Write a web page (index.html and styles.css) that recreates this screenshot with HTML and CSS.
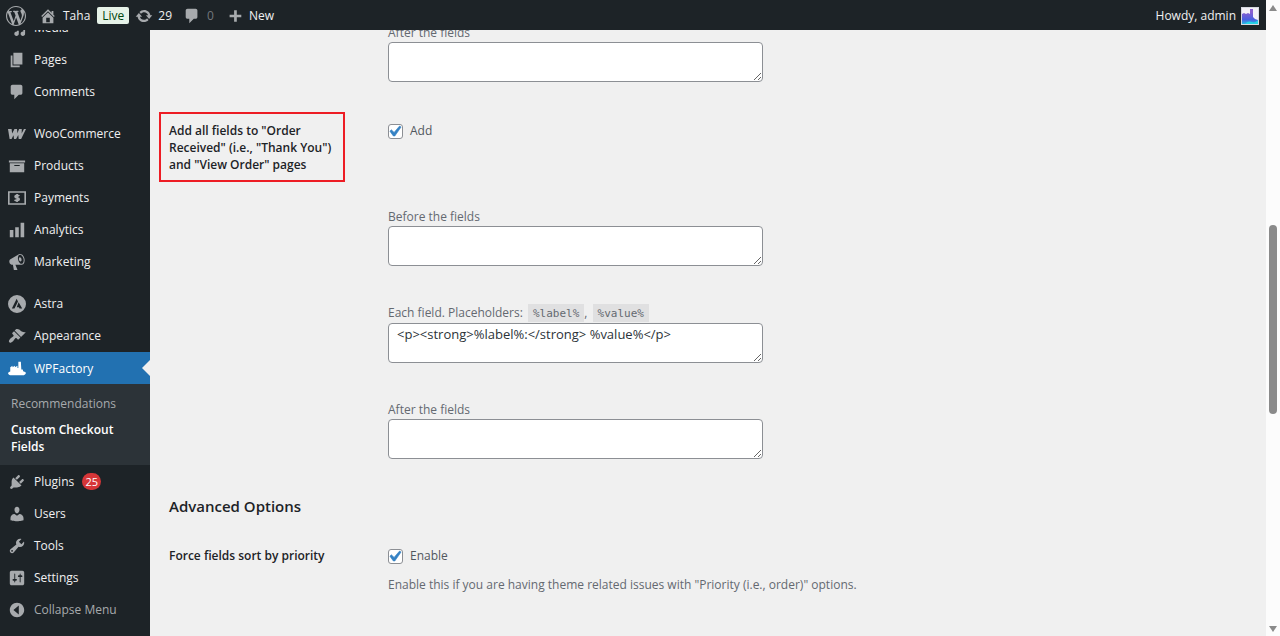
FILE: index.html
```
<!DOCTYPE html>
<html lang="en">
<head>
<meta charset="utf-8">
<meta name="viewport" content="width=device-width, initial-scale=1">
<title>Custom Checkout Fields</title>
<link rel="stylesheet" href="styles.css">
</head>
<body>
<div class="app">
  <div class="page">
    <header class="bar">
      <a class="bar-item bar-logo" href="#" aria-label="About WordPress"><svg class="icon icon-lg" viewBox="0 0 20 20"><path d="M20 10c0-5.51-4.49-10-10-10C4.48 0 0 4.49 0 10c0 5.52 4.48 10 10 10 5.51 0 10-4.48 10-10zM7.78 15.37L4.37 6.22c.55-.02 1.17-.08 1.17-.08.5-.06.44-1.13-.06-1.11 0 0-1.45.11-2.37.11-.18 0-.37 0-.58-.01C4.12 2.69 6.87 1.11 10 1.11c2.33 0 4.45.87 6.05 2.34-.68-.11-1.65.39-1.65 1.58 0 .74.45 1.36.9 2.1.35.61.55 1.36.55 2.46 0 1.49-1.4 5-1.4 5l-3.03-8.37c.54-.02.82-.17.82-.17.5-.05.44-1.25-.06-1.22 0 0-1.44.12-2.38.12-.87 0-2.33-.12-2.33-.12-.5-.03-.56 1.2-.06 1.22l.92.08 1.26 3.41zM17.41 10c.24-.64.74-1.87.43-4.25.7 1.29 1.05 2.71 1.05 4.25 0 3.29-1.73 6.24-4.4 7.78.97-2.59 1.94-5.2 2.92-7.78zM6.1 18.09C3.12 16.65 1.11 13.53 1.11 10c0-1.3.23-2.48.72-3.59C3.25 10.3 4.67 14.2 6.1 18.09zm4.03-6.63l2.58 6.98c-.86.29-1.76.45-2.71.45-.79 0-1.57-.11-2.29-.33.81-2.38 1.62-4.74 2.42-7.1z"/></svg></a>
      <a class="bar-item bar-site" href="#"><svg class="icon" viewBox="0 0 20 20"><path d="M16 8.5l1.53 1.53-1.06 1.06L10 4.6l-6.47 6.49-1.06-1.06L10 2.5l4 4v-2h2v4zm-6-2.46l6 5.99V18H4v-5.97zM12 17v-5H8v5h4z"/></svg><span>Taha</span></a>
      <a class="live" href="#">Live</a>
      <a class="bar-item bar-updates" href="#"><svg class="icon" viewBox="0 0 20 20"><path d="M10.2 3.28c3.53 0 6.43 2.61 6.92 6h2.08l-3.5 4-3.5-4h2.32c-.45-1.97-2.21-3.45-4.32-3.45-1.45 0-2.73.71-3.54 1.78L4.95 5.66C6.23 4.2 8.11 3.28 10.2 3.28zm-.4 13.44c-3.52 0-6.43-2.61-6.92-6H.8l3.5-4c1.17 1.33 2.33 2.67 3.5 4H5.48c.45 1.97 2.21 3.45 4.32 3.45 1.45 0 2.73-.71 3.54-1.78l1.71 1.95c-1.28 1.46-3.15 2.38-5.25 2.38z"/></svg><span>29</span></a>
      <a class="bar-item bar-comments" href="#"><svg class="icon" viewBox="0 0 20 20"><path d="M5 2h9c1.1 0 2 .9 2 2v7c0 1.1-.9 2-2 2h-2l-5 5v-5H5c-1.1 0-2-.9-2-2V4c0-1.1.9-2 2-2z"/></svg><span>0</span></a>
      <a class="bar-item bar-new" href="#"><svg class="icon" viewBox="0 0 20 20"><path d="M17 8.500v3h-5v5H9v-5H4v-3h5v-5h3v5h5z"/></svg><span>New</span></a>
      <a class="bar-item bar-user" href="#"><span>Howdy, admin</span>
        <svg class="avatar" viewBox="0 0 18 18"><defs><linearGradient id="av" x1="0" y1="0" x2="0" y2="1"><stop offset="0.2" stop-color="#8a5fd0"/><stop offset="0.7" stop-color="#4a5fe0"/><stop offset="1" stop-color="#27b9e8"/></linearGradient></defs><rect width="18" height="18" fill="#d5d8e0"/><rect x="1" y="1" width="16" height="16" fill="#f3f1f8"/><path d="M1 7l2-1 2 1 2-1 2 1V2h3v8l2 2 3 1v4H1z" fill="url(#av)"/><path d="M4 17c2-3 5-3 7-2s4 0 6-2v4z" fill="#25d3e6"/></svg></a>
    </header>
    <div class="body">
      <nav class="side" aria-label="Main menu">
        <ul class="menu">
          <li><a class="item" href="#"><svg class="icon" viewBox="0 0 20 20"><path d="M13 11V4c0-.55-.45-1-1-1h-1.670L9 1H5L3.670 3H2c-.55 0-1 .45-1 1v7c0 .55.45 1 1 1h10c.55 0 1-.45 1-1zM7 4.500c1.380 0 2.500 1.120 2.500 2.500S8.380 9.500 7 9.500 4.500 8.380 4.500 7 5.620 4.500 7 4.500zM14 6h5v10.500c0 1.380-1.120 2.500-2.500 2.500S14 17.880 14 16.500s1.120-2.500 2.500-2.500c.17 0 .34.02.5.05V9h-3V6zm-4 8.050V13h2v3.500c0 1.380-1.120 2.500-2.500 2.500S7 17.880 7 16.500 8.120 14 9.500 14c.17 0 .34.02.5.05z"/></svg>Media</a></li>
          <li><a class="item" href="#"><svg class="icon" viewBox="0 0 20 20"><path d="M6 15V2h10v13H6zm-1 1h8v2H3V5h2v11z"/></svg>Pages</a></li>
          <li><a class="item" href="#"><svg class="icon" viewBox="0 0 20 20"><path d="M5 2h9c1.1 0 2 .9 2 2v7c0 1.1-.9 2-2 2h-2l-5 5v-5H5c-1.1 0-2-.9-2-2V4c0-1.1.9-2 2-2z"/></svg>Comments</a></li>
          <li class="gap"><a class="item" href="#"><svg class="icon" viewBox="0 0 20 20"><path d="M0 4.500h4l.6 5 2.600-5h2.800l.5 4.700 1.800-4.700h3l-.1 4.900 2.500-4.900H20l-5.400 11h-2.700l-.5-4.300-2.400 4.300H6.700l-.6-4-2.200 4H1.800z"/></svg>WooCommerce</a></li>
          <li><a class="item" href="#"><svg class="icon" viewBox="0 0 20 20"><path d="M19 4v2H1V4h18zM2 7h16v10H2V7zm11 3V9H7v1h6z"/></svg>Products</a></li>
          <li><a class="item" href="#"><svg class="icon" viewBox="0 0 20 20"><path d="M0 2.500h20v15H0zM1.800 4.300v11.400h16.400V4.300z" fill-rule="evenodd"/><path class="line" d="M12.500 8C11.500 6.800 7.900 6.700 7.900 8.500c0 2 4.500 1 4.500 3 0 1.900-3.900 1.900-5 .5M10.100 5.600v8.800"/></svg>Payments</a></li>
          <li><a class="item" href="#"><svg class="icon" viewBox="0 0 20 20"><path d="M18 18V2h-4v16h4zm-6 0V7H8v11h4zm-6 0v-8H2v8h4z"/></svg>Analytics</a></li>
          <li><a class="item" href="#"><svg class="icon" viewBox="0 0 20 20"><path d="M18.150 5.940c.46 1.620.38 3.220-.02 4.480-.42 1.280-1.260 2.180-2.300 2.480-.16.06-.26.06-.4.06-.06.02-.12.02-.18.02-.06.02-.14.02-.22.02h-6.800l2.220 5.500c.02.14-.06.26-.14.34-.08.1-.24.16-.34.16H6.950c-.1 0-.26-.06-.34-.16-.08-.08-.16-.2-.14-.34l-1-5.500H4.250l-.02-.02c-.5.06-1.080-.18-1.540-.62s-.88-1.080-1.060-1.880c-.24-.8-.2-1.560-.02-2.200.18-.62.58-1.080 1.060-1.300l.02-.02 9-5.400c.1-.06.18-.1.24-.16.06-.04.14-.08.24-.12.16-.08.28-.12.5-.18 1.040-.3 2.240.1 3.220.98s1.840 2.240 2.260 3.860zm-2.580 5.980h-.02c.4-.1.74-.34 1.040-.7.58-.7.86-1.760.86-3.040 0-.64-.1-1.300-.28-1.980-.34-1.360-1.020-2.500-1.780-3.240s-1.680-1.100-2.460-.88c-.82.22-1.400.96-1.700 2-.32 1.040-.28 2.360.06 3.720.38 1.360 1 2.500 1.800 3.240.78.74 1.620 1.100 2.480.88zm-2.540-7.080c.22-.04.42-.02.62.04.38.16.76.48 1.020 1s.42 1.200.42 1.780c0 .3-.04.56-.12.8-.18.48-.44.84-.86.94-.34.1-.8-.06-1.140-.4s-.64-.86-.78-1.500c-.18-.62-.12-1.240.02-1.720s.48-.84.82-.94z"/></svg>Marketing</a></li>
          <li class="gap"><a class="item" href="#"><svg class="icon" viewBox="0 0 20 20"><path fill-rule="evenodd" d="M10 0a10 10 0 100 20 10 10 0 000-20zM9.600 4.200l1.500 2.900-3.900 7.900H4.300zM11.800 8.100l4 6.900h-3l-.7-1.500H9.700z"/></svg>Astra</a></li>
          <li><a class="item" href="#"><svg class="icon" viewBox="0 0 20 20"><path d="M14.480 11.060L7.410 3.990l1.500-1.500c.5-.56 2.300-.47 3.510.32 1.210.8 1.430 1.280 2.910 2.100 1.180.64 2.450 1.260 4.450.85zm-.71.71L6.700 4.700 4.930 6.470c-.39.39-.39 1.020 0 1.410l1.060 1.060c.39.39.39 1.030 0 1.420-.6.6-1.430 1.110-2.210 1.690-.35.26-.7.53-1.010.84C1.430 14.230.4 16.080 1.400 17.070c.99 1 2.840-.03 4.180-1.360.31-.31.58-.66.85-1.020.57-.78 1.080-1.610 1.690-2.210.39-.39 1.020-.39 1.410 0l1.060 1.060c.39.39 1.020.39 1.410 0z"/></svg>Appearance</a></li>
          <li class="current"><a class="item" href="#" aria-current="true"><svg class="icon" viewBox="0 0 20 20"><path d="M2.500 8L5 6.500V8l2.700-1.500V8l2.800-1.500V9h1V2h2.800l.5 8.500h1.600l.4 2c1 .1 2.200.8 3.200 1.800-.2 1.400-1.200 2.400-2.400 2.700H2.600C1.200 16.800.2 15.800 0 14.400c.7-.9 1.600-1.400 2.500-1.500z"/></svg>WPFactory</a>
            <ul class="submenu">
              <li><a href="#">Recommendations</a></li>
              <li><a class="active" href="#" aria-current="page">Custom Checkout Fields</a></li>
            </ul>
          </li>
          <li><a class="item" href="#"><svg class="icon" viewBox="0 0 20 20"><path d="M13.110 4.360L9.870 7.600 8 5.730l3.240-3.240c.35-.34 1.050-.2 1.560.32.52.51.66 1.210.31 1.550zm-8 1.770l.91-1.120 9.010 9.010-1.190.84c-.71.71-2.630 1.160-3.820 1.160H6.140L4.900 17.260c-.59.59-1.540.59-2.120 0-.59-.58-.59-1.530 0-2.120l1.240-1.240v-3.880c0-1.130.4-3.190 1.090-3.890zm7.260 3.970l3.240-3.240c.34-.35 1.040-.21 1.550.31.52.51.66 1.210.31 1.550l-3.240 3.250z"/></svg>Plugins<span class="count">25</span></a></li>
          <li><a class="item" href="#"><svg class="icon" viewBox="0 0 20 20"><path d="M10 9.250c-2.270 0-2.730-3.440-2.730-3.440C7 4.020 7.820 2 9.970 2c2.160 0 2.980 2.020 2.710 3.810 0 0-.41 3.440-2.680 3.440zm0 2.570L12.720 10c2.390 0 4.520 2.330 4.520 4.530v2.490s-3.650 1.130-7.240 1.130c-3.650 0-7.240-1.130-7.240-1.130v-2.490c0-2.250 1.940-4.480 4.470-4.480z"/></svg>Users</a></li>
          <li><a class="item" href="#"><svg class="icon" viewBox="0 0 20 20"><path d="M16.680 9.770c-1.340 1.340-3.300 1.670-4.950.99l-5.410 6.520c-.99.99-2.590.99-3.580 0s-.99-2.590 0-3.570l6.520-5.420c-.68-1.650-.35-3.610.99-4.950 1.280-1.280 3.120-1.620 4.720-1.060l-2.890 2.890 2.820 2.820 2.860-2.870c.53 1.580.18 3.390-1.080 4.650zM3.810 16.210c.4.39 1.040.39 1.430 0 .4-.4.4-1.040 0-1.430-.39-.4-1.030-.4-1.430 0-.39.39-.39 1.030 0 1.430z"/></svg>Tools</a></li>
          <li><a class="item" href="#"><svg class="icon" viewBox="0 0 20 20"><path d="M18 16V4c0-1.100-.9-2-2-2H4c-1.100 0-2 .9-2 2v12c0 1.100.9 2 2 2h12c1.100 0 2-.9 2-2zM8 11h1c.55 0 1 .45 1 1s-.45 1-1 1H8v1.500c0 .28-.22.5-.5.5s-.5-.22-.5-.5V13H6c-.55 0-1-.45-1-1s.45-1 1-1h1V5.500c0-.28.22-.5.5-.5s.5.22.5.5V11zm5-2h-1c-.55 0-1-.45-1-1s.45-1 1-1h1V5.500c0-.28.22-.5.5-.5s.5.22.5.5V7h1c.55 0 1 .45 1 1s-.45 1-1 1h-1v5.500c0 .28-.22.5-.5.5s-.5-.22-.5-.5V9z"/></svg>Settings</a></li>
          <li><button class="item collapse" type="button"><svg class="icon" viewBox="0 0 20 20"><path d="M10 2c4.420 0 8 3.580 8 8s-3.580 8-8 8-8-3.580-8-8 3.580-8 8-8zm2 13V5l-6 5z"/></svg>Collapse Menu</button></li>
        </ul>
      </nav>
      <main class="content">
        <form class="form">
          <div class="row">
            <div class="field">
              <label for="email-after">After the fields</label>
              <textarea id="email-after"></textarea>
            </div>
          </div>
          <div class="row row-check">
            <div class="title title-marked">Add all fields to "Order Received" (i.e., "Thank You") and "View Order" pages</div>
            <div class="field">
              <label class="check"><input type="checkbox" checked>Add</label>
            </div>
          </div>
          <div class="row">
            <div class="field">
              <label for="order-before">Before the fields</label>
              <textarea id="order-before"></textarea>
            </div>
          </div>
          <div class="row">
            <div class="field">
              <label for="order-each">Each field. Placeholders: <code>%label%</code>, <code>%value%</code></label>
              <textarea id="order-each">&lt;p&gt;&lt;strong&gt;%label%:&lt;/strong&gt; %value%&lt;/p&gt;</textarea>
            </div>
          </div>
          <div class="row">
            <div class="field">
              <label for="order-after">After the fields</label>
              <textarea id="order-after"></textarea>
            </div>
          </div>
          <h2 class="heading">Advanced Options</h2>
          <div class="row">
            <div class="title">Force fields sort by priority</div>
            <div class="field">
              <label class="check"><input type="checkbox" aria-describedby="sort-note" checked>Enable</label>
              <p class="note" id="sort-note">Enable this if you are having theme related issues with "Priority (i.e., order)" options.</p>
            </div>
          </div>
        </form>
      </main>
    </div>
  </div>
  <div class="scroll" aria-hidden="true">
    <svg class="arrow" viewBox="0 0 10 8"><path d="M5 1l4 6H1z"/></svg>
    <div class="track"><div class="thumb"></div></div>
    <svg class="arrow" viewBox="0 0 10 8"><path d="M5 7l4-6H1z"/></svg>
  </div>
</div>
</body>
</html>
```

FILE: styles.css
```
* {
  box-sizing: border-box;
}

body {
  margin: 0;
  background: #f0f0f0;
  color: #3c434a;
  font-family: "Open Sans", "Noto Sans", sans-serif;
  font-size: 12px;
  line-height: 18px;
}

a {
  color: inherit;
  text-decoration: none;
}

.app {
  display: flex;
  height: 100vh;
  overflow: hidden;
}

.page {
  flex: 1;
  min-width: 0;
  display: flex;
  flex-direction: column;
}

.icon {
  width: 18px;
  height: 18px;
  flex: none;
  fill: #a7aaad;
}

.icon-lg {
  width: 20px;
  height: 20px;
}

.line {
  fill: none;
  stroke: #a7aaad;
  stroke-width: 2;
}

/* Top bar */
.bar {
  flex: none;
  display: flex;
  align-items: center;
  height: 30px;
  padding: 1px 7px 0 6px;
  background: #1d2327;
  color: #f0f0f1;
}

.bar-item {
  display: flex;
  align-items: center;
  gap: 5px;
}

.bar-site {
  margin-left: 14px;
}

.live {
  margin: 0 7px;
  padding: 0 5px;
  border-radius: 2px;
  background: #e6f2e8;
  color: #00450c;
  line-height: 17px;
}

.bar-site .icon {
  margin-right: 1px;
  margin-left: -1px;
}

.bar-updates {
  margin-left: -1px;
}

.bar-comments {
  margin-left: 11px;
  gap: 6px;
}

.bar-comments span {
  color: #72777c;
}

.bar-new {
  margin-left: 12px;
}

.bar-user {
  margin-left: auto;
}

.avatar {
  width: 18px;
  height: 18px;
}

/* Side menu */
.body {
  flex: 1;
  min-height: 0;
  display: flex;
}

.side {
  flex: none;
  width: 150px;
  overflow: hidden;
  background: #1d2327;
  color: #f0f0f1;
}

.menu,
.submenu {
  margin: 0;
  padding: 0;
  list-style: none;
}

/* The menu is scrolled partway under the top bar */
.menu {
  margin-top: -19px;
}

.gap {
  margin-top: 10px;
}

.item {
  display: flex;
  align-items: center;
  gap: 8px;
  width: 100%;
  height: 32px;
  padding: 1px 8px 0;
  border: 0;
  background: none;
  color: inherit;
  font: inherit;
}

.collapse {
  color: #a7aaad;
}

.current {
  margin-top: 1px;
}

.current .item {
  position: relative;
  background: #2271b1;
  color: #fff;
}

.current .item::after {
  content: "";
  position: absolute;
  top: 8px;
  right: 0;
  border: 8px solid transparent;
  border-left: 0;
  border-right-color: #f0f0f0;
}

.current .icon {
  fill: #fff;
}

.submenu {
  padding: 6px 0 5px;
  background: #2c3338;
}

.submenu a {
  display: block;
  padding: 5px 11px;
  color: #a7aaad;
  line-height: 17px;
}

.submenu .active {
  padding: 4px 11px 5px;
  color: #fff;
  font-weight: 600;
}

.count {
  min-width: 19px;
  border-radius: 9px;
  background: #d63638;
  color: #fff;
  font-size: 11px;
  line-height: 17px;
  text-align: center;
}

/* Settings form */
.content {
  flex: 1;
  min-width: 0;
  overflow: hidden;
  padding: 0 19px;
}

.form {
  display: flex;
  flex-direction: column;
  gap: 38px;
  margin-top: -6px;
}

.row {
  display: grid;
  grid-template-columns: 219px minmax(0, 1fr);
  align-items: start;
}

.field {
  grid-column: 2;
  color: #646970;
}

.field label {
  display: block;
}

.title {
  color: #1d2327;
  font-weight: 600;
  line-height: 17px;
}

.row-check {
  margin: -8px 0 -12px;
}

.title-marked {
  width: 186px;
  margin-left: -10px;
  padding: 8px 8px 7px;
  border: 2px solid #ed1c24;
}

.row-check .field {
  padding-top: 10px;
}

textarea {
  display: block;
  width: 100%;
  max-width: 375px;
  height: 40px;
  padding: 1px 8px;
  border: 1px solid #8c8f94;
  border-radius: 4px;
  background: #fff;
  color: #2c3338;
  font: inherit;
  font-size: 13px;
  overflow: hidden;
}

code {
  margin-left: 2px;
  padding: 3px 5px 2px;
  background: #e0e0e1;
  font-family: "DejaVu Sans Mono", monospace;
  font-size: 11px;
}

.field .check {
  display: flex;
  align-items: center;
  gap: 7px;
  color: #50575e;
}

.check input {
  appearance: none;
  width: 15px;
  height: 15px;
  margin: 0;
  border: 1px solid #8c8f94;
  border-radius: 3px;
  background: #fff url("data:image/svg+xml,%3Csvg xmlns='http://www.w3.org/2000/svg' viewBox='4 3 14 14'%3E%3Cpath d='M14.830 4.890l1.340.94-5.810 8.380H9.020L5.780 9.670l1.340-1.250 2.570 2.400z' fill='%233582c4' stroke='%233582c4' stroke-width='.6'/%3E%3C/svg%3E") center / 15px no-repeat;
}

.heading {
  margin: 0 0 -6px;
  color: #1d2327;
  font-size: 15px;
  font-weight: 600;
  line-height: 18px;
}

.note {
  margin: 11px 0 0;
}

/* Scroll bar */
.scroll {
  flex: none;
  display: flex;
  flex-direction: column;
  align-items: center;
  width: 14px;
  padding: 4px 0 3px;
  background: #fcfcfc;
}

.arrow {
  width: 10px;
  height: 8px;
  fill: #8a8a8a;
}

.track {
  flex: 1;
  display: flex;
  flex-direction: column;
}

.track::before {
  content: "";
  flex: 213;
}

.track::after {
  content: "";
  flex: 211;
}

.thumb {
  flex: 189;
  width: 8px;
  border-radius: 4px;
  background: #8a8a8a;
}
```
